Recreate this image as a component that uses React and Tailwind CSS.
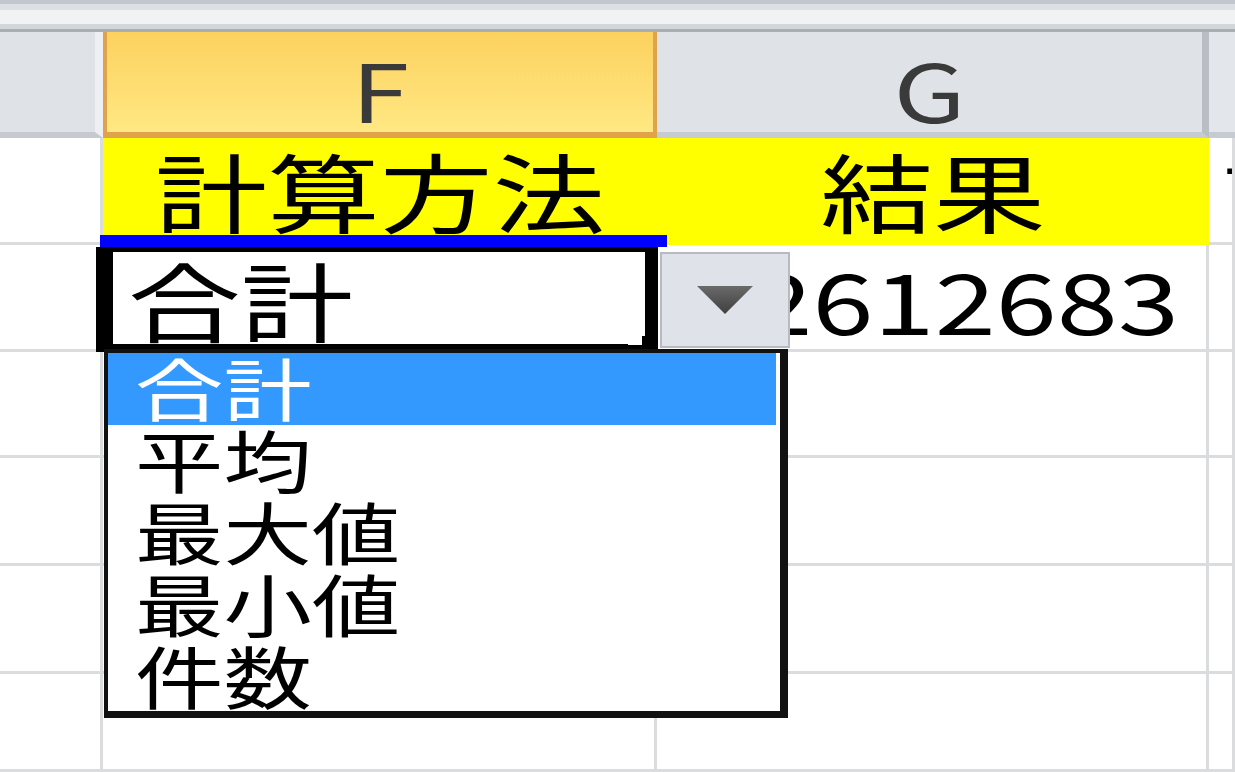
import React from "react";

const cjk = "font-['Noto_Sans_CJK_JP','Noto_Sans_CJK_SC',sans-serif]";
const grid = "border-r-[3px] border-b-[3px] border-[#dadcdd]";

const items = ["合計", "平均", "最大値", "最小値", "件数"];

function Wide({ children, origin = "origin-center", className = "" }) {
  // the screenshot is stretched sideways, so every glyph is too
  return (
    <span className={`inline-block whitespace-nowrap scale-x-[1.31] ${origin} ${className}`}>
      {children}
    </span>
  );
}

function TopBand() {
  return (
    <div className="flex flex-col">
      <div className="h-[4px] bg-[#c3c7cd]" />
      <div className="h-[6px] bg-[#dcdfe3]" />
      <div className="h-[14px] bg-[#f1f2f4]" />
      <div className="h-[5px] bg-[#d2d5da]" />
      <div className="h-[3px] bg-[#a9adb4]" />
    </div>
  );
}

function Sheet() {
  return (
    <div
      className={`grid grid-cols-[103px_554px_552px_26px] grid-rows-[106px_107px_107px_106px_108px_108px_98px] ${cjk} text-black`}
    >
      {/* column headers */}
      <div className="bg-[#dfe2e7] border-r-[8px] border-r-[#edeff2] border-b-[6px] border-b-[#c6cad0]" />
      <div className="flex justify-center pt-[16px] bg-linear-to-b from-[#fcd15f] to-[#ffe882] border-x-[4px] border-b-[6px] border-[#e0a24b] text-[80px] leading-none text-[#3a3a3a] overflow-hidden">
        <Wide>F</Wide>
      </div>
      <div className="flex justify-center pt-[16px] bg-[#dfe3e8] border-r-[7px] border-r-[#b9bec5] border-b-[6px] border-b-[#c6cbd2] text-[80px] leading-none text-[#3a3a3a] overflow-hidden">
        <Wide>G</Wide>
      </div>
      <div className="bg-[#e3e6ea] border-b-[6px] border-b-[#c6cbd2]" />

      {/* row 1 */}
      <div className={grid} />
      <div className="flex justify-center pt-[9px] bg-[#ffff00] text-[86px] leading-none overflow-hidden">
        <Wide>計算方法</Wide>
      </div>
      <div className="flex justify-center pt-[9px] bg-[#ffff00] text-[86px] leading-none overflow-hidden">
        <Wide>結果</Wide>
      </div>
      <div className={`${grid} pl-[14px] pt-[9px] text-[86px] leading-none overflow-hidden`}>
        <Wide origin="origin-left">詳細</Wide>
      </div>

      {/* row 2 */}
      <div className={grid} />
      <div className={`${grid} pl-[25px] pt-[11px] text-[86px] leading-none overflow-hidden`}>
        <Wide origin="origin-left">合計</Wide>
      </div>
      <div className={`${grid} flex justify-end pr-[27px] pt-[12px] text-[84px] leading-none overflow-hidden`}>
        <Wide origin="origin-right">12612683</Wide>
      </div>
      <div className={grid} />

      {[0, 1, 2, 3, 4].map((r) => (
        <React.Fragment key={r}>
          <div className={grid} />
          <div className={grid} />
          <div className={grid} />
          <div className={grid} />
        </React.Fragment>
      ))}
    </div>
  );
}

function Dropdown() {
  return (
    <>
      {/* validation arrow button */}
      <div className="absolute left-[660px] top-[252px] w-[130px] h-[96px] flex items-center justify-center bg-[#dfe2e8] border-2 border-[#b6bbc3]">
        <svg width="56" height="28" viewBox="0 0 56 28">
          <defs>
            <linearGradient id="tri" x1="0" y1="0" x2="0" y2="1">
              <stop offset="0" stopColor="#6a6a6a" />
              <stop offset="1" stopColor="#3f3f3f" />
            </linearGradient>
          </defs>
          <path d="M0 0 H56 L28 28 Z" fill="url(#tri)" />
        </svg>
      </div>

      {/* list */}
      <div className={`absolute left-[104px] top-[349px] w-[684px] h-[369px] bg-white border-[4px] border-r-[8px] border-b-[7px] border-[#111] ${cjk}`}>
        {items.map((t, i) => (
          <div
            key={t}
            className={`h-[72px] pl-[27px] text-[68px] leading-[68px] overflow-hidden ${
              i === 0 ? "bg-[#3399ff] text-white mr-[4px]" : "text-black"
            }`}
          >
            <span className="inline-block whitespace-nowrap scale-x-[1.3] origin-left">{t}</span>
          </div>
        ))}
      </div>
    </>
  );
}

export default function App() {
  return (
    <div className="relative w-[1235px] h-[772px] overflow-hidden bg-white">
      <TopBand />
      <Sheet />

      {/* active cell F2 */}
      <div className="absolute left-[100px] top-[235px] w-[567px] h-[12px] bg-[#0000ff]" />
      <div className="absolute left-[96px] top-[247px] w-[562px] h-[105px] border-l-[17px] border-t-[5px] border-r-[13px] border-b-[8px] border-black" />
      <div className="absolute left-[628px] top-[341px] w-[14px] h-[4px] bg-white" />
      <div className="absolute left-[642px] top-[336px] w-[16px] h-[16px] bg-black" />

      <Dropdown />
    </div>
  );
}
